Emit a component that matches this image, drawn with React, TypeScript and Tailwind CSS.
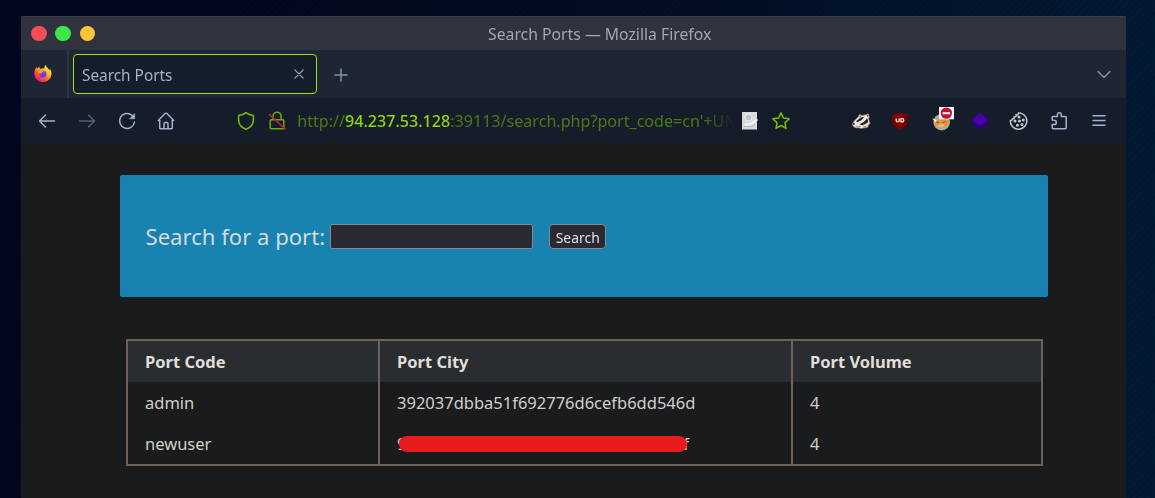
import React from "react";

type IconProps = { children: React.ReactNode; className?: string; size?: number };

function Icon({ children, className = "", size = 20 }: IconProps) {
  return (
    <svg
      width={size}
      height={size}
      viewBox="0 0 20 20"
      fill="none"
      stroke="currentColor"
      strokeWidth="1.5"
      strokeLinecap="round"
      strokeLinejoin="round"
      className={`shrink-0 ${className}`}
    >
      {children}
    </svg>
  );
}

function Slot({ children }: { children: React.ReactNode }) {
  return <span className="flex w-[39.7px] shrink-0 items-center justify-center">{children}</span>;
}

function FirefoxLogo() {
  return (
    <svg width="18" height="18" viewBox="0 0 18 18" className="shrink-0">
      <defs>
        <linearGradient id="flame" x1="0.85" y1="0.1" x2="0.2" y2="0.95">
          <stop offset="0" stopColor="#fff44f" />
          <stop offset="0.4" stopColor="#ffa51f" />
          <stop offset="0.7" stopColor="#ff4a3d" />
          <stop offset="1" stopColor="#e5127d" />
        </linearGradient>
      </defs>
      <path
        d="M11.400 0c-.8 1.200-1.100 2.200-.9 3.300l-4.300.4C5.600 3.300 5.300 2.500 5.400 1.500 4.500 2 3.800 2.700 3.200 3.500 2.800 3.100 2.700 2.600 2.700 2 1.200 3.500.3 5.800.3 8.800a8.600 8.500 0 0 0 17.200 0c0-1.900-.6-3.700-1.900-5 .1.700.1 1.200-.1 1.800C14.600 3.200 12.400 2.300 11.400 0z"
        fill="url(#flame)"
      />
      <circle cx="8.900" cy="9.200" r="3.500" fill="#7542e5" />
      <path d="M3.500 5.600c1.800-.8 4.200-.5 5.800.7L7.700 8 5.700 8.400z" fill="#ff9c24" />
      <path d="M6.800 9.700c1.300 1.200 3.100.8 4.200-.1-.7 2-3.500 2.500-4.200.1z" fill="#4c35bd" />
    </svg>
  );
}

function Badger() {
  return (
    <svg width="20" height="18" viewBox="0 0 20 18" className="shrink-0">
      <path d="M1 12 4.500 7.500 7.300 5l1.200-2.800 2 1.300 4.500-.8 2.300-.9.800 2.800-.4 2.400 1.300 4.500-1.500 1.200-.7 2.500-4.100.8-2.200.6-3.200-.9-2.100.3-2.600-1.200z" fill="#ebe6df" stroke="#a37a5c" strokeWidth=".7" />
      <path d="M5 9.300 9.800 5.600l3.500-.8-2.800 3.200-4 2.300zM8.500 12.300l4-2 3.800-4.100 1 3.700-2.800 2.200-3.500 1.100z" fill="#1f2022" />
      <path d="m8.900 3.400 1.100.8-1.500 1.100zM15.300 3.700l1.500-.6.2 1.700z" fill="#222" />
      <ellipse cx="2.600" cy="11.800" rx="1.300" ry=".9" fill="#242424" />
      <path d="m4.500 14 3 .8 2.500-.6M12 14.900l3.700-.8" stroke="#a97d5a" fill="none" strokeWidth=".8" />
    </svg>
  );
}

function UblockShield() {
  return (
    <svg width="18" height="20" viewBox="0 0 18 20" className="shrink-0">
      <path d="M9 1.500c2 1.200 4.400 1.800 7.500 1.800v7.200c0 4-3.500 6.200-7.500 8-4-1.800-7.500-4-7.500-8V3.300c3.100 0 5.500-.6 7.500-1.800z" fill="#800000" />
      <path d="M5.200 7.500v2a1.500 1.500 0 0 0 3 0v-2M10 7.500v3.500h1a1.750 1.750 0 0 0 0-3.500z" stroke="#fff" strokeWidth="1.200" fill="none" />
    </svg>
  );
}

function BlockedFox() {
  return (
    <svg width="24" height="26" viewBox="0 0 24 26" className="shrink-0">
      <circle cx="11.700" cy="15.200" r="8.300" fill="#b5a896" />
      <path d="M4.500 13 6 12.900l5.500.2 7-.8c.2 4.200-2.200 7.600-7 7.700-4.100 0-7-3.200-7-7z" fill="#ef912f" />
      <path d="m2.300 11.300 4.500 1.800-1.800 2.500z" fill="#fff0d7" />
      <path d="m7 18.200 3.400-.6 4.500-.8-1.800 2.700-4 .5z" fill="#e3bd8a" />
      <path d="m6.500 15.200 2.400.5M12.500 15.700l2.800-1.200" stroke="#6e5137" strokeWidth="1" />
      <path d="M9 .1h15v12.100H9z" fill="#fff" />
      <circle cx="16.400" cy="6.100" r="5.700" fill="#c51035" />
      <path d="M12.600 5.200h7.600v2h-7.600z" fill="#fff" />
    </svg>
  );
}

function Layers() {
  return (
    <svg width="20" height="20" viewBox="0 0 20 20" className="shrink-0">
      <path d="m1.300 12 8.700-6 8.700 6-8.700 6.700z" fill="#28007a" />
      <path d="m1.200 8.900 8.800-7.300 8.800 7.300-8.800 6.700z" fill="#4500a8" />
    </svg>
  );
}

function TitleBar() {
  return (
    <header className="flex h-[34px] shrink-0 items-center border-t border-[#393c47] bg-[#30333e] pl-[10px]">
      <div className="flex gap-[8.700px]">
        <span className="size-[15.600px] rounded-full bg-[#f54e56]" />
        <span className="size-[15.600px] rounded-full bg-[#3ae84b]" />
        <span className="size-[15.600px] rounded-full bg-[#fac536]" />
      </div>
      <h1 className="ml-[393px] origin-left scale-x-[0.985] whitespace-nowrap text-[16px] leading-5 text-[#9da8b9]">
        Search Ports — Mozilla Firefox
      </h1>
    </header>
  );
}

function TabStrip() {
  return (
    <div className="flex h-12 shrink-0 items-center bg-[#1e2633]">
      <div className="flex h-full w-[48px] items-center border-r-2 border-[#2b3544] pl-[13px]">
        <FirefoxLogo />
      </div>
      <div className="ml-[4px] flex h-10 w-[244px] items-center justify-between rounded-[4px] border border-[#9be500] bg-[#141e2b] pl-2 pr-[10px] text-[#a5b3ca]">
        <span className="origin-left scale-x-[0.96] whitespace-nowrap pt-px text-[16px]">Search Ports</span>
        <Icon size={14}>
          <path d="m4 4 12 12M16 4 4 16" />
        </Icon>
      </div>
      <Icon size={20} className="ml-[14px] mt-[2px] text-[#8493a9]">
        <path d="M10 4v12M4 10h12" />
      </Icon>
      <Icon size={20} className="ml-auto mr-[12px] mt-[2px] text-[#8493a9]">
        <path d="m4 6.500 6 6 6-6" />
      </Icon>
    </div>
  );
}

function AddressBar() {
  return (
    <div className="flex min-w-0 items-center">
      <Icon className="text-[#7fbd00]">
        <path d="M10 1.700c2 1.600 4.500 2.400 7.400 2.700v4.400c0 4.400-3 8-7.400 9.500-4.400-1.500-7.400-5.100-7.400-9.500V4.400C5.500 4.100 8 3.300 10 1.700z" />
      </Icon>
      <Icon className="ml-[11px] text-[#72aa00]">
        <path d="M6 8.500V5.200a4 4 0 0 1 8 0v3.300M4.200 8.800h11.600a1 1 0 0 1 1 1v7a1 1 0 0 1-1 1H4.200a1 1 0 0 1-1-1v-7a1 1 0 0 1 1-1z" />
        <path d="m2.500 3.500 15.500 14.500" stroke="#d01543" />
      </Icon>
      <div className="ml-[10px] w-[437px] overflow-hidden whitespace-nowrap text-[16.100px] leading-6 text-[#4b7815] [mask-image:linear-gradient(to_right,black_93%,transparent_100%)]">
        http://<span className="font-medium text-[#91d600]">94.237.53.128</span>:39113/search.php?port_code=cn'+UN
      </div>
      <svg width="18" height="20" viewBox="0 0 18 20" className="ml-[7px] shrink-0">
        <path d="M1 1h15v17.500H1z" fill="#d9dadb" />
        <circle cx="7.500" cy="6.500" r="3.500" fill="#c2c4c6" stroke="#f2f2f2" strokeWidth="1" />
        <path d="M3.500 13.500h5l8-5" stroke="#f8f8f8" strokeWidth="1.800" fill="none" />
        <path d="M3 15.500h8l3-2" stroke="#b5b7ba" fill="none" />
      </svg>
      <Icon className="ml-[12px] text-[#80bd00]">
        <path d="m10 1.800 2.400 5.300 5.800.7-4.300 3.900 1.100 5.700-5-2.900-5 2.900 1.100-5.700-4.300-3.900 5.800-.7z" />
      </Icon>
    </div>
  );
}

function Toolbar() {
  return (
    <nav className="flex h-[45px] shrink-0 items-center bg-[#151d2a] pl-[6.500px] pr-[7px] pt-px text-[#a5b2cf]">
      <Slot>
        <Icon>
          <path d="M17.500 10h-15M8.500 4l-6 6 6 6" />
        </Icon>
      </Slot>
      <Slot>
        <Icon className="text-[#536071]">
          <path d="M2.500 10h15M11.500 4l6 6-6 6" />
        </Icon>
      </Slot>
      <Slot>
        <Icon>
          <path d="M17.500 11A7.500 7.500 0 1 1 15 4.300l1.500 1.500" />
          <path d="M17.700 2.800v5h-5z" fill="currentColor" strokeWidth=".5" />
        </Icon>
      </Slot>
      <Slot>
        <Icon>
          <path d="M2.300 9.500 9 2.600a1.400 1.400 0 0 1 2 0l6.700 6.900M3.700 9v7.700a1 1 0 0 0 1 1h10.600a1 1 0 0 0 1-1V9M8 17.500v-5a1 1 0 0 1 1-1h2a1 1 0 0 1 1 1v5" />
        </Icon>
      </Slot>
      <div className="ml-[50px]">
        <AddressBar />
      </div>
      <div className="ml-auto flex items-center">
        <Slot><Badger /></Slot>
        <Slot><UblockShield /></Slot>
        <Slot><span className="-mt-[3px] ml-[4px]"><BlockedFox /></span></Slot>
        <Slot><Layers /></Slot>
        <Slot>
          <Icon className="text-[#c0c7cb]">
            <path d="M7.800 2.100a8.200 8.200 0 1 0 10.300 7.300c-1.300.4-2-.3-1.800-1.500-1.700.2-2.300-.8-1.800-2-1.700.2-2.600-.7-2-2.100-1.300.6-2.400.1-2.300-1.800z" transform="translate(19.500 0) scale(-1 1)" />
            <circle cx="10" cy="6" r=".8" fill="currentColor" />
            <circle cx="6" cy="10" r=".8" fill="currentColor" />
            <circle cx="10.500" cy="10" r=".8" fill="currentColor" />
            <circle cx="14.300" cy="9" r=".8" fill="currentColor" />
            <circle cx="13" cy="13.500" r=".8" fill="currentColor" />
            <circle cx="8.500" cy="14.300" r=".8" fill="currentColor" />
          </Icon>
        </Slot>
        <Slot>
          <Icon>
            <path d="M3.200 9V6.600a1 1 0 0 1 1-1H8.400V3.700a1.900 1.900 0 0 1 3.800 0v1.900h4a1 1 0 0 1 1 1v10.200a1 1 0 0 1-1 1H4.200a1 1 0 0 1-1-1v-3.300h2a2 2 0 0 0 0-4.200z" />
          </Icon>
        </Slot>
        <Slot>
          <Icon>
            <path d="M4 4.800h12M4 9.500h12M4 14.200h12" />
          </Icon>
        </Slot>
      </div>
    </nav>
  );
}

function SearchForm() {
  return (
    <form className="flex h-[121.500px] w-[928px] shrink-0 items-center rounded-[2px] bg-[#1882b0] pl-[25px] text-[#d6dbd9]" onSubmit={(e) => e.preventDefault()}>
      <label htmlFor="port" className="w-[185px] whitespace-nowrap pl-[0.500px] text-[22.100px] leading-8">Search for a port:</label>
      <input id="port" className="mt-[2px] h-[25px] w-[203px] rounded-[2px] border border-[#898794] bg-[#2b2a33]" />
      <button className="ml-4 mt-[2px] flex h-[25px] w-[57px] items-center justify-center rounded-[4px] border border-[#898794] bg-[#2b2a33] text-[15px] text-[#e1dfe0]">
        <span className="scale-x-[0.93]">Search</span>
      </button>
    </form>
  );
}

const cell = "border-x-2 border-[#6c6258] pl-[17px] pt-[2px] text-left";

function PortTable() {
  return (
    <table className="w-[917px] table-fixed border-collapse border-2 border-[#6c6258] text-[16.500px] leading-6 text-[#d2cfc9]">
      <colgroup>
        <col className="w-[252px]" />
        <col className="w-[413px]" />
        <col />
      </colgroup>
      <thead>
        <tr className="h-[42px] bg-[#292d2f] text-[#e0ded9]">
          <th className={cell}>Port Code</th>
          <th className={cell}>Port City</th>
          <th className={cell}>Port Volume</th>
        </tr>
      </thead>
      <tbody>
        <tr className="h-[41px]">
          <td className={cell}>admin</td>
          <td className={cell}>392037dbba51f692776d6cefb6dd546d</td>
          <td className={cell}>4</td>
        </tr>
        <tr className="h-[42px]">
          <td className={cell}>newuser</td>
          <td className={cell}>
            <div className="relative flex w-[292px] justify-between">
              <span>9</span>
              <span>f</span>
              <span className="absolute left-[2px] top-[4px] h-4 w-[288px] rounded-full bg-[#e61c1c]" />
            </div>
          </td>
          <td className={cell}>4</td>
        </tr>
      </tbody>
    </table>
  );
}

export default function App() {
  return (
    <div className="h-[498px] w-[1155px] overflow-hidden bg-[repeating-linear-gradient(135deg,#00000020_0px,#00000020_2px,transparent_2px,transparent_5px),linear-gradient(90deg,#020720_0%,#020a20_35%,#021026_65%,#031a35_100%)] pl-[21px] pt-4 font-['Noto_Sans',sans-serif]">
      <div className="flex h-[482px] w-[1104.500px] flex-col overflow-hidden rounded-t-[2px] bg-[#1a1b1c]">
        <TitleBar />
        <TabStrip />
        <Toolbar />
        <main className="flex flex-col pl-[99px] pt-8">
          <SearchForm />
          <div className="ml-[6px] mt-[42px]">
            <PortTable />
          </div>
        </main>
      </div>
    </div>
  );
}
